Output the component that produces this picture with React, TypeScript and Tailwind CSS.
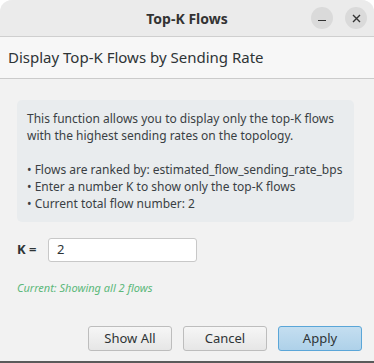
import React from "react";

export default function App() {
  return (
    <div
      className="w-[374px] h-[363px] bg-white overflow-hidden"
      style={{ fontFamily: '"Noto Sans", "Open Sans", sans-serif' }}
    >
      <div className="w-full h-full flex flex-col bg-[#f2f2f2] rounded-t-[12px] overflow-hidden">
        {/* Title bar */}
        <div className="relative h-[37px] shrink-0 bg-[#ebebeb] border-b border-[#cfcfcf] flex items-center justify-center">
          <span className="text-[14px] font-bold text-[#333333]">Top-K Flows</span>
          <div className="absolute right-[7px] top-[7px] flex gap-[12px]">
            <div className="w-[22px] h-[22px] rounded-full bg-[#dadada] flex items-center justify-center">
              <div className="w-[8px] h-[1.5px] bg-[#333] mt-[5px]" />
            </div>
            <div className="w-[22px] h-[22px] rounded-full bg-[#dadada] flex items-center justify-center">
              <svg width="9" height="9" viewBox="0 0 9 9">
                <path d="M1 1 L8 8 M8 1 L1 8" stroke="#333" strokeWidth="1.4" />
              </svg>
            </div>
          </div>
        </div>
        {/* Header */}
        <div className="h-[42px] shrink-0 bg-[#f7f7f7] border-b border-[#cbcbcb] flex items-center px-[8px]">
          <span className="text-[15px] text-[#2e3436]">Display Top-K Flows by Sending Rate</span>
        </div>
        {/* Body */}
        <div className="flex-1 flex flex-col px-[17px] pt-[21px]">
          <div className="w-[337px] bg-[#e9ecee] rounded-[5px] px-[10px] pt-[10px] pb-[10px] text-[12px] leading-[17px] text-[#3a3f44]">
            <div>This function allows you to display only the top-K flows</div>
            <div>with the highest sending rates on the topology.</div>
            <div>&nbsp;</div>
            <div>• Flows are ranked by: estimated_flow_sending_rate_bps</div>
            <div>• Enter a number K to show only the top-K flows</div>
            <div>• Current total flow number: 2</div>
          </div>
          <div className="flex items-center mt-[16px] h-[24px]">
            <span className="text-[13px] font-bold text-[#2e3436] w-[31px]">K =</span>
            <div className="w-[149px] h-[24px] bg-white border border-[#c8c8c8] rounded-[3px] flex items-center px-[8px] text-[13px] text-[#2e3436]">
              2
            </div>
          </div>
          <div className="mt-[18px] text-[11px] leading-[15px] italic text-[#5cb87a]">
            Current: Showing all 2 flows
          </div>
          <div className="flex-1" />
          <div className="flex justify-end gap-[11px] pr-[-5px] mr-[-5px] mb-[10px]">
            <button className="w-[84px] h-[25px] rounded-[3px] border border-[#bdbdbd] bg-gradient-to-b from-[#f6f6f6] to-[#e6e6e6] text-[13px] text-[#2e3436]">
              Show All
            </button>
            <button className="w-[84px] h-[25px] rounded-[3px] border border-[#bdbdbd] bg-gradient-to-b from-[#f6f6f6] to-[#e6e6e6] text-[13px] text-[#2e3436]">
              Cancel
            </button>
            <button className="w-[84px] h-[25px] rounded-[3px] border border-[#5aa6d8] bg-gradient-to-b from-[#c4def0] to-[#aed1e9] text-[13px] text-[#2e3436]">
              Apply
            </button>
          </div>
          <div className="h-[2px] bg-[#5a5a5a] mx-[-17px]" />
        </div>
      </div>
    </div>
  );
}
